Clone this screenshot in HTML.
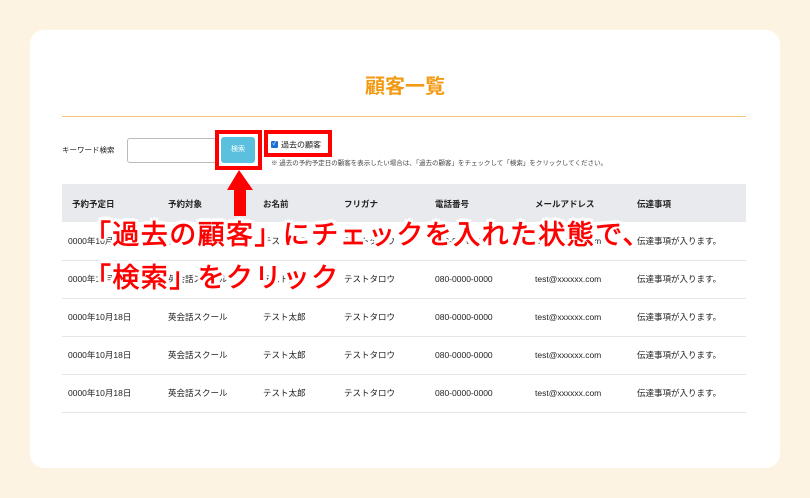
<!DOCTYPE html>
<html><head><meta charset="utf-8"><style>
*{margin:0;padding:0;box-sizing:border-box}
body{width:810px;height:498px;background:#fcf3e3;position:relative;overflow:hidden;font-family:"Liberation Sans","Noto Sans CJK JP",sans-serif;color:#222}
.card{position:absolute;left:30px;top:30px;width:750px;height:438px;background:#fff;border-radius:14px}
.a{position:absolute;white-space:nowrap}
.title{left:0;width:810px;text-align:center;top:70px;font-size:20px;font-weight:bold;color:#f29a12}
.hr{left:62px;top:116px;width:684px;height:1px;background:#f7c37a}
.th{left:62px;top:184px;width:684px;height:38px;background:#e9eaee}
.line{left:62px;width:684px;height:1px;background:#e6e6e6}
.t{font-size:8.5px;transform:translateY(-50%)}
.b{font-weight:bold}
.red{font-size:27px;font-weight:normal;color:#f00;letter-spacing:1.4px;-webkit-text-stroke:0.7px #f00;
text-shadow:3px 0 #fff,-3px 0 #fff,0 3px #fff,0 -3px #fff,2px 2px #fff,-2px -2px #fff,2px -2px #fff,-2px 2px #fff,4px 0 #fff,-4px 0 #fff,0 4px #fff,0 -4px #fff,3px 3px #fff,-3px -3px #fff,3px -3px #fff,-3px 3px #fff}
</style></head><body>
<div class="card"></div>
<div class="a title">顧客一覧</div>
<div class="a hr"></div>
<div class="a t" style="left:62px;top:150px;font-size:7.5px">キーワード検索</div>
<div class="a" style="left:127px;top:138px;width:90px;height:25px;border:1px solid #bbb;border-radius:3px;background:#fff"></div>
<div class="a" style="left:215px;top:130px;width:47px;height:40px;border:4px solid #f00"></div>
<div class="a" style="left:221px;top:137px;width:34px;height:26px;background:#5bc0de;border-radius:3px;color:#fff;font-size:7px;text-align:center;line-height:26px">検索</div>
<div class="a" style="left:264px;top:130px;width:68px;height:27px;border:4px solid #f00"></div>
<div class="a" style="left:271px;top:141px;width:7px;height:7px;background:#1a6fd6;border-radius:1px;color:#fff;font-size:6px;line-height:7px;text-align:center">✓</div>
<div class="a t" style="left:281px;top:145px;font-size:8px">過去の顧客</div>
<div class="a t" style="left:271px;top:162px;font-size:6.5px;color:#444">※ 過去の予約予定日の顧客を表示したい場合は、「過去の顧客」をチェックして「検索」をクリックしてください。</div>
<div class="a th"></div>
<div class="a line" style="top:260px"></div>
<div class="a line" style="top:298px"></div>
<div class="a line" style="top:336px"></div>
<div class="a line" style="top:374px"></div>
<div class="a line" style="top:412px"></div>
<div class="a t b" style="left:72px;top:204px">予約予定日</div>
<div class="a t b" style="left:168px;top:204px">予約対象</div>
<div class="a t b" style="left:263px;top:204px">お名前</div>
<div class="a t b" style="left:344px;top:204px">フリガナ</div>
<div class="a t b" style="left:435px;top:204px">電話番号</div>
<div class="a t b" style="left:535px;top:204px">メールアドレス</div>
<div class="a t b" style="left:637px;top:204px">伝達事項</div>
<div id="rows"></div>
<script>
var ys=[241,279,317,355,393],h='';
ys.forEach(function(y){
var c=[[68,'0000年10月18日'],[168,'英会話スクール'],[263,'テスト太郎'],[344,'テストタロウ'],[435,'080-0000-0000'],[535,'test@xxxxxx.com'],[637,'伝達事項が入ります。']];
c.forEach(function(d){h+='<div class="a t" style="left:'+d[0]+'px;top:'+y+'px">'+d[1]+'</div>';});
});
document.getElementById('rows').innerHTML=h;
</script>
<svg class="a" style="left:226px;top:170px" width="28" height="46"><polygon points="12,0 26,20 19,20 19,46 7,46 7,20 0,20" fill="#f00" transform="translate(1,0)"/></svg>
<div class="a red" style="left:84px;top:213px">「過去の顧客」にチェックを入れた状態で、</div>
<div class="a red" style="left:84px;top:256px">「検索」をクリック</div>
</body></html>
